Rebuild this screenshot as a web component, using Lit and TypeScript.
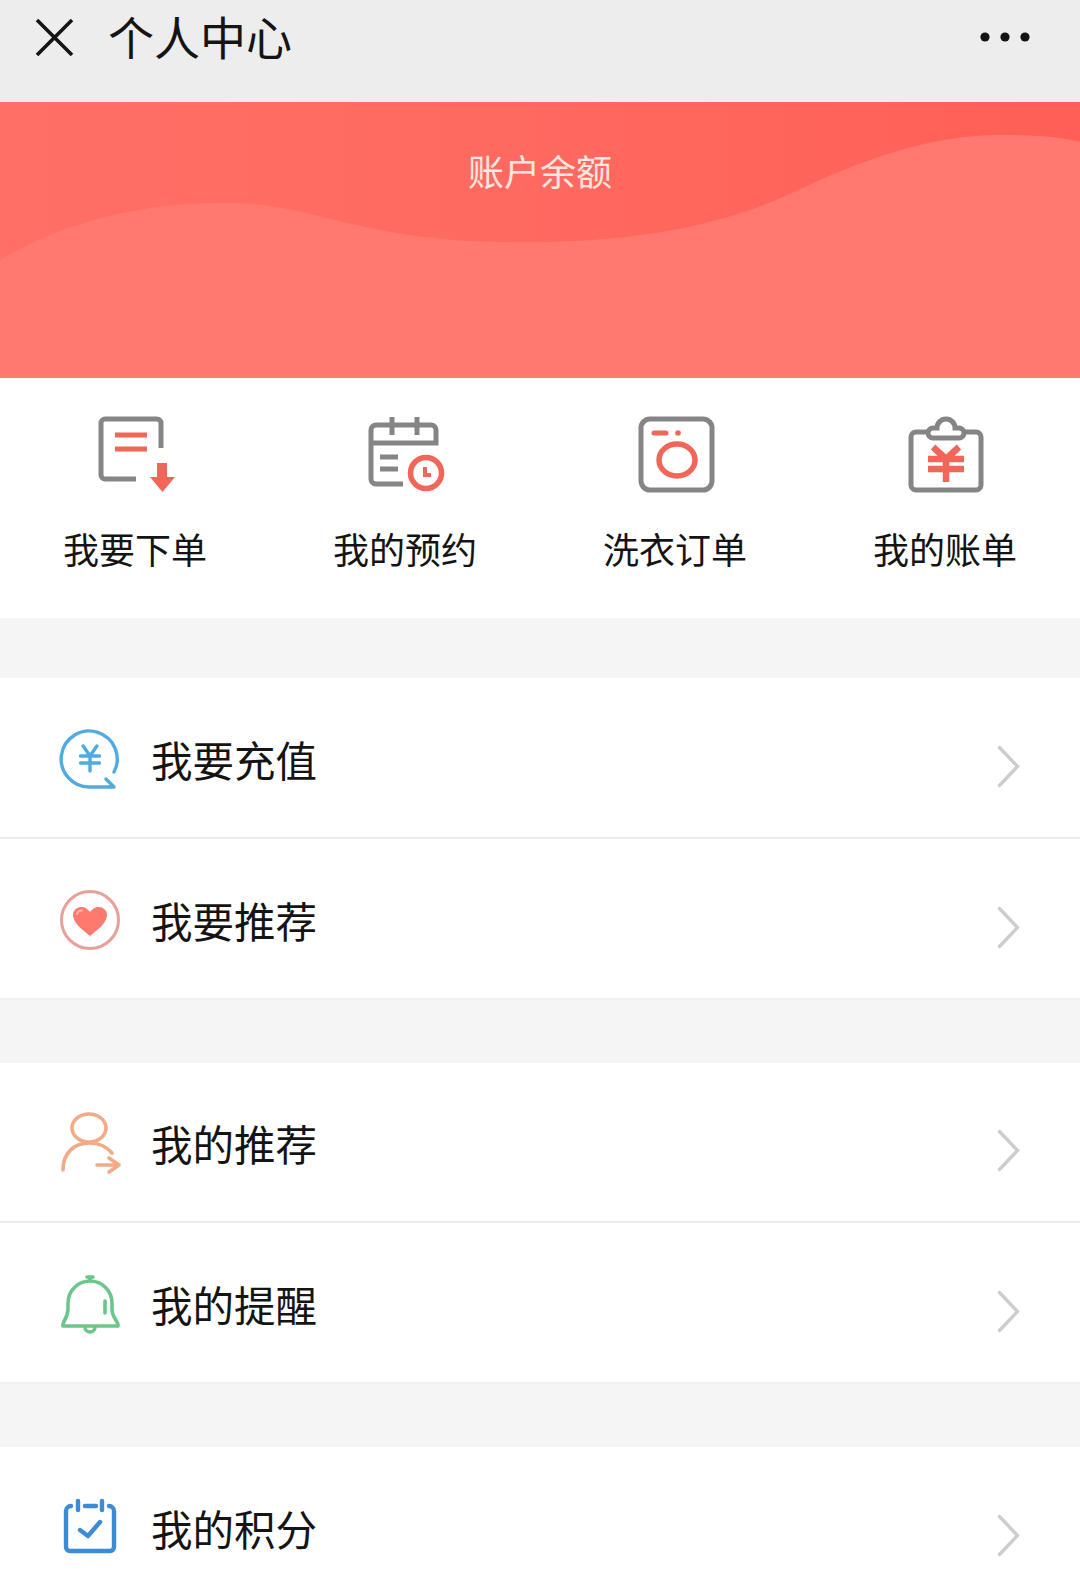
import { LitElement, html, css, svg } from 'lit'
import { customElement } from 'lit/decorators.js'

const GRAY = '#858585'
const RED = '#f2665a'

const yen = (cx: number, top: number, bottom: number, w: number, y1: number, y2: number) => svg`
  <path d="M${cx - w * 0.72} ${top} L${cx} ${y1} L${cx + w * 0.72} ${top} M${cx - w} ${y1} H${cx + w} M${cx - w} ${y2} H${cx + w} M${cx} ${y1} V${bottom}" />
`

const quickIcons = {
  order: svg`
    <g fill="none" stroke="${GRAY}" stroke-width="5">
      <path d="M66 34 V9 a4 4 0 0 0-4-4 H10 a4 4 0 0 0-4 4 V61 a4 4 0 0 0 4 4 H41" />
    </g>
    <path d="M20 21 H52 M20 35 H52" stroke="${RED}" stroke-width="5" />
    <path d="M62 49 H72 V63 H80 L67.5 78 L55 63 H62 Z" fill="${RED}" />
  `,
  booking: svg`
    <g fill="none" stroke="${GRAY}" stroke-width="5">
      <path d="M38 70 H11 a5 5 0 0 1-5-5 V16 a5 5 0 0 1 5-5 H66 a5 5 0 0 1 5 5 V29 H6" />
      <path d="M27 3 V21 M52 3 V21 M15 43 H33 M15 55 H33" />
    </g>
    <circle cx="61" cy="59" r="15.5" fill="#fff" stroke="${RED}" stroke-width="5.5" />
    <path d="M60 53 V61 H66" fill="none" stroke="${RED}" stroke-width="4" />
  `,
  washer: svg`
    <rect x="6" y="5" width="71" height="71" rx="9" fill="none" stroke="${GRAY}" stroke-width="5" />
    <path d="M19 19 H31" stroke="${RED}" stroke-width="5" stroke-linecap="round" />
    <circle cx="43" cy="19" r="2.8" fill="${RED}" />
    <ellipse cx="42" cy="46" rx="18" ry="16" fill="none" stroke="${RED}" stroke-width="5.5" />
  `,
  bill: svg`
    <g fill="none" stroke="${GRAY}" stroke-width="5">
      <path d="M23 18 H11 a5 5 0 0 0-5 5 V71 a5 5 0 0 0 5 5 H71 a5 5 0 0 0 5-5 V23 a5 5 0 0 0-5-5 H59" />
      <path d="M28 24 H54 a5 5 0 0 0 0-10 H50 a9 9 0 0 0-18 0 H28 a5 5 0 0 0 0 10 Z" />
    </g>
    <g fill="none" stroke="${RED}" stroke-width="6.5">${yen(41, 33, 68, 18, 45, 55)}</g>
  `,
}

const rowIcons = {
  recharge: svg`
    <g fill="none" stroke="#4fabe0" stroke-width="3.4" stroke-linecap="round" stroke-linejoin="round">
      <path d="M54 43 A28 28 0 1 0 30 58 H54 L46 50" />
      ${yen(30, 17, 42, 9.5, 27, 34)}
    </g>
  `,
  recommend: svg`
    <circle cx="30" cy="30" r="28.5" fill="none" stroke="#e8a098" stroke-width="3" />
    <path d="M30 46 C20 38 13 32 13 25 C13 20 17 17 21.5 17 C25 17 28 19 30 22 C32 19 35 17 38.5 17 C43 17 47 20 47 25 C47 32 40 38 30 46 Z" fill="#ff7a6e" />
    <path d="M17 24 C17.5 21.5 19.5 20.5 22 20.5" fill="none" stroke="#ffb3aa" stroke-width="2" stroke-linecap="round" />
  `,
  referral: svg`
    <g fill="none" stroke="#f2ab87" stroke-width="3.6" stroke-linecap="round" stroke-linejoin="round">
      <ellipse cx="29" cy="15" rx="17" ry="14" />
      <path d="M3 57 C3 40 14 30 29 30 C39 30 47 34 52 40" />
      <path d="M37 52 H59 M49 45 L59 52 L49 59" />
    </g>
  `,
  remind: svg`
    <g fill="none" stroke="#6cc68c" stroke-width="3.6" stroke-linecap="round" stroke-linejoin="round">
      <path d="M27 3 H33 M30 3 V7" />
      <path d="M3 52 C2 48 8 44 8 35 V29 A22 22 0 0 1 52 29 V35 C52 44 59 48 58 52 Z" />
      <path d="M25 53 A5 5 0 0 0 35 53" />
      <path d="M45 27 V39" />
    </g>
  `,
  points: svg`
    <g fill="none" stroke="#3c8bd3" stroke-width="4.4" stroke-linecap="round" stroke-linejoin="round" transform="translate(0 -2)">
      <path d="M11 10 A5 5 0 0 0 6 15 V51 A4 4 0 0 0 10 55 H50 A4 4 0 0 0 54 51 V15 A5 5 0 0 0 49 10" />
      <path d="M18 5 V14 M42 5 V14 M25 10 H36" />
      <path d="M20 34 L28 40 L40 26" />
    </g>
  `,
}

const quickLinks = [
  { label: '我要下单', icon: quickIcons.order },
  { label: '我的预约', icon: quickIcons.booking },
  { label: '洗衣订单', icon: quickIcons.washer },
  { label: '我的账单', icon: quickIcons.bill },
]

const menuGroups = [
  [
    { label: '我要充值', icon: rowIcons.recharge },
    { label: '我要推荐', icon: rowIcons.recommend },
  ],
  [
    { label: '我的推荐', icon: rowIcons.referral },
    { label: '我的提醒', icon: rowIcons.remind },
  ],
  [{ label: '我的积分', icon: rowIcons.points }],
]

@customElement('app-root')
export class AppRoot extends LitElement {
  static styles = css`
    :host {
      display: block;
      width: 1080px;
      height: 1591px;
      overflow: hidden;
      background: #f5f5f5;
      color: #141414;
      font-family: 'Noto Sans CJK SC', 'Noto Sans', sans-serif;
    }
    .topbar {
      height: 102px;
      box-sizing: border-box;
      padding: 0 50px 28px 35px;
      background: #eeeded;
      display: flex;
      align-items: center;
      gap: 34px;
    }
    .topbar .close {
      width: 39px;
      height: 39px;
      flex: none;
    }
    .topbar h1 {
      flex: 1;
      margin: 0 0 4px;
      font-size: 46px;
      font-weight: 400;
      line-height: 60px;
      color: #141414;
    }
    .topbar .more {
      width: 50px;
      height: 10px;
      flex: none;
    }
    .banner {
      position: relative;
      height: 276px;
      background: linear-gradient(90deg, #ff6f65, #ff6a60 45%, #ff5f55);
      overflow: hidden;
    }
    .banner .wave {
      position: absolute;
      inset: 0;
      width: 100%;
      height: 100%;
    }
    .banner .title {
      position: relative;
      padding-top: 43px;
      text-align: center;
      font-size: 36px;
      line-height: 50px;
      color: #ffe6e0;
    }
    .quick {
      height: 240px;
      display: grid;
      grid-template-columns: repeat(4, 270px);
      background: #fff;
    }
    .quick-item {
      display: flex;
      flex-direction: column;
      align-items: center;
      padding-top: 36px;
      font-size: 36px;
      line-height: 50px;
    }
    .quick-item svg {
      width: 80px;
      height: 80px;
      margin-bottom: 29px;
    }
    .groups {
      display: flex;
      flex-direction: column;
      gap: 63px;
      padding-top: 60px;
    }
    .row {
      height: 161px;
      box-sizing: border-box;
      display: flex;
      align-items: center;
      padding: 0 60px 0 60px;
      background: #fff;
      border-bottom: 2px solid #ececec;
    }
    .group:nth-child(2) .row:first-child {
      height: 160px;
    }
    .row:last-child {
      border-bottom-color: #f0f0f0;
    }
    .row svg.icon {
      width: 60px;
      height: 60px;
      flex: none;
      overflow: visible;
      margin-top: 2px;
    }
    .row .label {
      flex: 1;
      margin: 2px 0 0 31px;
      font-size: 41.5px;
      line-height: 56px;
    }
    .row .chevron {
      width: 23px;
      height: 43px;
      flex: none;
      margin-top: 17px;
    }
  `

  render() {
    return html`
      <header class="topbar">
        <svg class="close" viewBox="0 0 39 39">
          <path d="M2 2 L37 37 M37 2 L2 37" fill="none" stroke="#141414" stroke-width="3.6" />
        </svg>
        <h1>个人中心</h1>
        <svg class="more" viewBox="0 0 50 10">
          <circle cx="5" cy="5" r="4.6" fill="#141414" />
          <circle cx="25" cy="5" r="4.6" fill="#141414" />
          <circle cx="45" cy="5" r="4.6" fill="#141414" />
        </svg>
      </header>
      <section class="banner">
        <svg class="wave" viewBox="0 0 1080 276" preserveAspectRatio="none">
          <path
            d="M0 158 C40 135 110 101 225 101 C310 101 350 133 470 139 C600 145 710 130 792 91 C860 58 930 33 999 33 C1030 33 1060 34 1080 40 V276 H0 Z"
            fill="#ff7970"
          />
        </svg>
        <div class="title">账户余额</div>
      </section>
      <nav class="quick">
        ${quickLinks.map(
          (item) => html`
            <div class="quick-item">
              <svg viewBox="0 0 80 80">${item.icon}</svg>
              <span>${item.label}</span>
            </div>
          `
        )}
      </nav>
      <div class="groups">
        ${menuGroups.map(
          (group) => html`
            <div class="group">
              ${group.map(
                (row) => html`
                  <div class="row">
                    <svg class="icon" viewBox="0 0 60 60">${row.icon}</svg>
                    <span class="label">${row.label}</span>
                    <svg class="chevron" viewBox="0 0 23 43">
                      <path d="M2.5 2.5 L20.5 21.5 L2.5 40.5" fill="none" stroke="#cdcdcd" stroke-width="3.4" stroke-linecap="round" />
                    </svg>
                  </div>
                `
              )}
            </div>
          `
        )}
      </div>
    `
  }
}
